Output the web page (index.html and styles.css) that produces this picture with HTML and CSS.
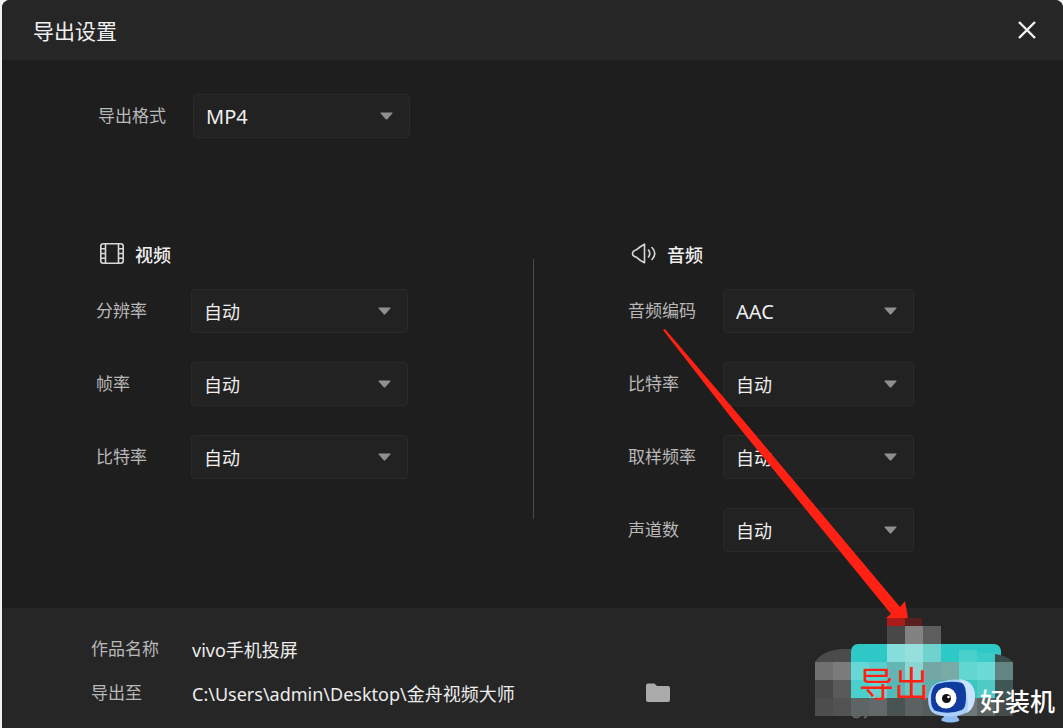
FILE: index.html
```
<!DOCTYPE html>
<html lang="zh-CN">
<head>
<meta charset="utf-8">
<title>导出设置</title>
<link rel="stylesheet" href="styles.css">
</head>
<body>
<main class="dialog">
  <header class="titlebar">
    <h1 class="title">导出设置</h1>
    <button class="close" type="button" aria-label="关闭">
      <svg width="20" height="20" viewBox="0 0 20 20"><path d="M2 2 L18 18 M18 2 L2 18" fill="none" stroke="#f4f4f4" stroke-width="2.4"/></svg>
    </button>
  </header>

  <form class="body">
    <div class="field format">
      <label for="format">导出格式</label>
      <div class="picker">
        <select id="format" class="latin"><option>MP4</option></select>
        <svg class="caret" viewBox="0 0 13 8"><path d="M1 0.5 H12 Q13 0.5 12.3 1.5 L7.5 7 Q6.5 8 5.5 7 L0.7 1.5 Q0 0.5 1 0.5 Z"/></svg>
      </div>
    </div>

    <div class="columns">
      <section class="group video">
        <h2 class="group-title">
          <svg width="32" height="24" viewBox="0 0 32 24" fill="none" stroke="#d8d8d8" stroke-width="1.6"><rect x="4.8" y="1.8" width="22.4" height="19.4" rx="2.5"/><path d="M9.5 2 V21 M22.5 2 V21 M5 6.8 H9.5 M5 11.5 H9.5 M5 16.2 H9.5 M22.5 6.8 H27 M22.5 11.5 H27 M22.5 16.2 H27"/></svg>
          视频
        </h2>
        <div class="field">
          <label for="resolution">分辨率</label>
          <div class="picker">
            <select id="resolution"><option>自动</option></select>
            <svg class="caret" viewBox="0 0 13 8"><path d="M1 0.5 H12 Q13 0.5 12.3 1.5 L7.5 7 Q6.5 8 5.5 7 L0.7 1.5 Q0 0.5 1 0.5 Z"/></svg>
          </div>
        </div>
        <div class="field">
          <label for="fps">帧率</label>
          <div class="picker">
            <select id="fps"><option>自动</option></select>
            <svg class="caret" viewBox="0 0 13 8"><path d="M1 0.5 H12 Q13 0.5 12.3 1.5 L7.5 7 Q6.5 8 5.5 7 L0.7 1.5 Q0 0.5 1 0.5 Z"/></svg>
          </div>
        </div>
        <div class="field">
          <label for="vbitrate">比特率</label>
          <div class="picker">
            <select id="vbitrate"><option>自动</option></select>
            <svg class="caret" viewBox="0 0 13 8"><path d="M1 0.5 H12 Q13 0.5 12.3 1.5 L7.5 7 Q6.5 8 5.5 7 L0.7 1.5 Q0 0.5 1 0.5 Z"/></svg>
          </div>
        </div>
      </section>

      <div class="divider"></div>

      <section class="group audio">
        <h2 class="group-title">
          <svg width="32" height="24" viewBox="0 0 32 24" fill="none" stroke="#d8d8d8" stroke-width="1.6" stroke-linejoin="round" stroke-linecap="round"><path d="M16.5 2.2 V20.8 Q12 18.5 8.6 15.3 Q4.5 14.3 4.5 11.5 Q4.5 8.7 8.6 7.7 Q12 4.5 16.5 2.2 Z"/><path d="M20.5 8 Q23 11.5 20.5 15 M24 5.5 Q29.5 11.5 24 17.5"/></svg>
          音频
        </h2>
        <div class="field">
          <label for="codec">音频编码</label>
          <div class="picker">
            <select id="codec" class="latin"><option>AAC</option></select>
            <svg class="caret" viewBox="0 0 13 8"><path d="M1 0.5 H12 Q13 0.5 12.3 1.5 L7.5 7 Q6.5 8 5.5 7 L0.7 1.5 Q0 0.5 1 0.5 Z"/></svg>
          </div>
        </div>
        <div class="field">
          <label for="abitrate">比特率</label>
          <div class="picker">
            <select id="abitrate"><option>自动</option></select>
            <svg class="caret" viewBox="0 0 13 8"><path d="M1 0.5 H12 Q13 0.5 12.3 1.5 L7.5 7 Q6.5 8 5.5 7 L0.7 1.5 Q0 0.5 1 0.5 Z"/></svg>
          </div>
        </div>
        <div class="field">
          <label for="sampling">取样频率</label>
          <div class="picker">
            <select id="sampling"><option>自动</option></select>
            <svg class="caret" viewBox="0 0 13 8"><path d="M1 0.5 H12 Q13 0.5 12.3 1.5 L7.5 7 Q6.5 8 5.5 7 L0.7 1.5 Q0 0.5 1 0.5 Z"/></svg>
          </div>
        </div>
        <div class="field">
          <label for="channels">声道数</label>
          <div class="picker">
            <select id="channels"><option>自动</option></select>
            <svg class="caret" viewBox="0 0 13 8"><path d="M1 0.5 H12 Q13 0.5 12.3 1.5 L7.5 7 Q6.5 8 5.5 7 L0.7 1.5 Q0 0.5 1 0.5 Z"/></svg>
          </div>
        </div>
      </section>
    </div>
  </form>

  <footer class="footer">
    <div class="output">
      <div class="output-row">
        <label for="name">作品名称</label>
        <input id="name" type="text" value="vivo手机投屏">
      </div>
      <div class="output-row">
        <label for="path">导出至</label>
        <input id="path" type="text" readonly value="C:\Users\admin\Desktop\金舟视频大师">
        <button class="browse" type="button" aria-label="选择文件夹">
          <svg width="24" height="20" viewBox="0 0 24 20"><path d="M2 0.5 H8.5 L11 3 H22 Q24 3 24 5 V17 Q24 19 22 19 H2 Q0 19 0 17 V2.5 Q0 0.5 2 0.5 Z" fill="#aaaaaa"/></svg>
        </button>
      </div>
    </div>
    <button class="export" type="button"><span class="export-text">导出</span></button>
  </footer>

  <svg class="marks" width="410" height="410" viewBox="653 318 410 410" aria-hidden="true">
    <g shape-rendering="crispEdges">
      <rect x="887" y="618" width="18" height="8" fill="#a91c19"/>
      <rect x="905" y="618" width="17" height="8" fill="#5a1e1e"/>
      <rect x="887" y="626" width="18" height="18" fill="#484848"/>
      <rect x="905" y="626" width="18" height="18" fill="#828282"/>
      <rect x="923" y="626" width="18" height="18" fill="#5d5d5d"/>
      <rect x="887" y="644" width="18" height="18" fill="#86dedb"/>
      <rect x="905" y="644" width="18" height="18" fill="#96dfdc"/>
      <rect x="923" y="644" width="18" height="18" fill="#6fd2cf"/>
      <rect x="959" y="650" width="18" height="12" fill="#4bcfcb"/>
      <rect x="977" y="653" width="18" height="9" fill="#3ccbc7"/>
    </g>
    <path d="M815 662 Q823 650 842 649 H851 V662 Z" fill="#4b4b4b"/>
    <path d="M995 654 Q1008 656 1013 662 H995 Z" fill="#3c4c4b"/>
    <g shape-rendering="crispEdges">
      <rect x="815" y="662" width="18" height="18" fill="#707070"/>
      <rect x="833" y="662" width="18" height="18" fill="#7b7b7b"/>
      <rect x="851" y="662" width="18" height="18" fill="#65d8d5"/>
      <rect x="869" y="662" width="18" height="18" fill="#57cfcc"/>
      <rect x="887" y="662" width="18" height="18" fill="#65b5b2"/>
      <rect x="905" y="662" width="18" height="18" fill="#8bd5d2"/>
      <rect x="923" y="662" width="18" height="18" fill="#73a7a4"/>
      <rect x="941" y="662" width="18" height="18" fill="#78aaa6"/>
      <rect x="959" y="662" width="18" height="18" fill="#62d7d2"/>
      <rect x="977" y="662" width="18" height="18" fill="#6cdad5"/>
      <rect x="995" y="662" width="18" height="18" fill="#628482"/>
      <rect x="815" y="680" width="18" height="18" fill="#484848"/>
      <rect x="833" y="680" width="18" height="18" fill="#5a5a5a"/>
      <rect x="851" y="680" width="18" height="18" fill="#4bcfcc"/>
      <rect x="869" y="680" width="18" height="18" fill="#62d3d0"/>
      <rect x="887" y="680" width="18" height="18" fill="#54b9b6"/>
      <rect x="905" y="680" width="18" height="18" fill="#6dc4c1"/>
      <rect x="923" y="680" width="18" height="18" fill="#5cafac"/>
      <rect x="941" y="680" width="18" height="18" fill="#54aaa7"/>
      <rect x="959" y="680" width="18" height="18" fill="#3ac7c2"/>
      <rect x="977" y="680" width="18" height="18" fill="#50cac4"/>
      <rect x="995" y="680" width="18" height="18" fill="#405655"/>
      <rect x="815" y="698" width="18" height="18" fill="#4d4d4d"/>
      <rect x="833" y="698" width="18" height="18" fill="#525252"/>
      <rect x="851" y="698" width="18" height="18" fill="#5d6665"/>
      <rect x="869" y="698" width="18" height="18" fill="#626968"/>
      <rect x="887" y="698" width="18" height="18" fill="#495352"/>
      <rect x="905" y="698" width="18" height="18" fill="#5b6261"/>
      <rect x="923" y="698" width="18" height="18" fill="#555d5c"/>
      <rect x="941" y="698" width="18" height="18" fill="#596160"/>
      <rect x="959" y="698" width="18" height="18" fill="#707877"/>
      <rect x="977" y="698" width="18" height="18" fill="#5d6262"/>
      <rect x="995" y="698" width="18" height="18" fill="#484b4b"/>
    </g>
    <path d="M853 716 Q856 719 860 716 M864 718 L867 716" stroke="#666" stroke-width="2" fill="none"/>
    <path d="M663 330 L665 329 L743 420 L900 607 L905 601 L908 618 L886 618 L891 614 L733 420 Z" fill="#ff2113"/>
  </svg>

  <div class="watermark">
    <svg width="48" height="45" viewBox="926 678 48 45" aria-hidden="true">
      <path d="M942 714 H957 L956 717 Q959 719 958 721 Q950 724 941 721 Q939 719 943 717 Z" fill="#8fbdf2"/>
      <path d="M936 683 Q952 677 966 681 Q973 684 974 695 Q974 708 967 712 Q951 720 934 714 Q927 711 927 699 Q928 687 936 683 Z" fill="#a9cffa"/>
      <path d="M958 679 Q973 681 974 695 Q974 708 966 713 Q970 694 958 679 Z" fill="#c8e2ff"/>
      <path d="M936 684 Q950 680 961 683 Q965 685 965 697 Q965 708 961 710 Q948 715 935 711 Q930 709 930 699 Q930 687 936 684 Z" fill="#103b9e"/>
      <circle cx="945" cy="698" r="10.5" fill="#fff"/>
      <circle cx="945.5" cy="698.5" r="4.5" fill="#111"/>
      <circle cx="947.5" cy="697" r="1.3" fill="#fff"/>
    </svg>
    <span>好装机</span>
  </div>
</main>
</body>
</html>
```
FILE: styles.css
```
* {
  box-sizing: border-box;
}

body {
  margin: 0;
  background: #f1f1f1;
  font-family: "Noto Sans", "Noto Sans CJK SC", sans-serif;
  font-size: 17px;
  color: #b8b8b8;
}

button,
input,
select {
  margin: 0;
  padding: 0;
  border: 0;
  background: none;
  font: inherit;
  color: inherit;
}

svg {
  display: block;
}

label {
  padding-bottom: 3px;
}

.dialog {
  position: relative;
  display: flex;
  flex-direction: column;
  min-height: 100vh;
  margin-left: 2px;
  border-radius: 8px 8px 0 0;
  overflow: hidden;
  background: #1e1e1e;
}

.titlebar {
  display: flex;
  align-items: center;
  justify-content: space-between;
  height: 60px;
  padding: 0 26px 0 31px;
  background: #262626;
}

.title {
  margin: 0;
  font-size: 21px;
  font-weight: 400;
  color: #f0f0f0;
}

.body {
  flex: 1;
  padding: 34px 0 56px;
}

.field {
  display: grid;
  grid-template-columns: 95px 217px;
  align-items: center;
}

.format {
  padding-left: 96px;
}

.audio .field {
  grid-template-columns: 95px 191px;
}

.picker {
  display: grid;
  align-items: center;
}

.picker > * {
  grid-area: 1 / 1;
}

.picker select {
  width: 100%;
  height: 44px;
  padding: 2px 36px 0 12px;
  border: 1px solid #2a2a2a;
  border-radius: 4px;
  background: #222222;
  appearance: none;
  font-size: 18px;
  color: #efefef;
}

.picker .latin {
  padding-top: 0;
  font-size: 20px;
}

.caret {
  justify-self: end;
  width: 13px;
  height: 8px;
  margin-right: 17px;
  fill: #8f8f8f;
  pointer-events: none;
}

.columns {
  display: grid;
  grid-template-columns: 1fr 1px 1fr;
  margin-top: 105px;
  padding-left: 2px;
}

.group {
  display: flex;
  flex-direction: column;
  gap: 29px;
}

.video {
  padding-left: 92px;
}

.audio {
  padding-left: 94px;
}

.group-title {
  display: flex;
  align-items: center;
  gap: 7px;
  height: 22px;
  margin: 0 0 -5px;
  font-size: 18px;
  font-weight: 500;
  color: #f0f0f0;
}

.divider {
  margin: 16px 0 33px;
  background: #4a4a4a;
}

.footer {
  display: flex;
  justify-content: space-between;
  height: 120px;
  padding: 19px 62px 13px 89px;
  background: #262626;
}

.output-row {
  display: grid;
  grid-template-columns: 101px 454px 24px;
  align-items: center;
  height: 44px;
}

.output-row input {
  font-size: 18px;
  color: #ededed;
}

.export {
  width: 150px;
  height: 54px;
  margin-top: 17px;
  padding: 12px 0 0 8px;
  border-radius: 7px;
  background: #2ec9c6;
  text-align: left;
}

.export-text {
  position: relative;
  z-index: 2;
  font-size: 35px;
  color: #ff2113;
}

.marks {
  position: absolute;
  right: 0;
  bottom: 0;
  z-index: 1;
  pointer-events: none;
}

.watermark {
  position: absolute;
  right: 8px;
  bottom: 5px;
  z-index: 3;
  display: flex;
  align-items: center;
  gap: 5px;
  font-size: 25px;
  font-weight: 500;
  line-height: 36px;
  color: #ffffff;
  pointer-events: none;
}
```
